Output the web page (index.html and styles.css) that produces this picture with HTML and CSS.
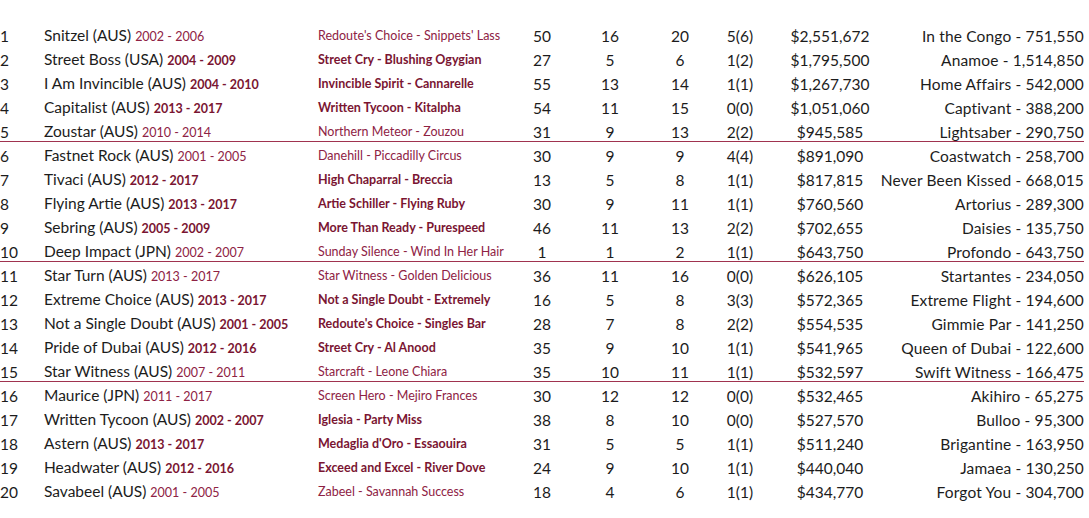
FILE: index.html
```html
<!DOCTYPE html>
<html>
<head>
<meta charset="utf-8">
<link rel="stylesheet" href="styles.css">
</head>
<body>
<div class="table">
  <div class="row">
    <span class="rank">1</span><span class="name">Snitzel (AUS) <span class="yrs">2002 - 2006</span></span><span class="sire">Redoute's Choice - Snippets' Lass</span><span class="n">50</span><span class="n">16</span><span class="n">20</span><span class="n">5(6)</span><span class="n money">$2,551,672</span><span class="best">In the Congo - 751,550</span>
  </div>
  <div class="row bold">
    <span class="rank">2</span><span class="name">Street Boss (USA) <span class="yrs">2004 - 2009</span></span><span class="sire">Street Cry - Blushing Ogygian</span><span class="n">27</span><span class="n">5</span><span class="n">6</span><span class="n">1(2)</span><span class="n money">$1,795,500</span><span class="best">Anamoe - 1,514,850</span>
  </div>
  <div class="row bold">
    <span class="rank">3</span><span class="name">I Am Invincible (AUS) <span class="yrs">2004 - 2010</span></span><span class="sire">Invincible Spirit - Cannarelle</span><span class="n">55</span><span class="n">13</span><span class="n">14</span><span class="n">1(1)</span><span class="n money">$1,267,730</span><span class="best">Home Affairs - 542,000</span>
  </div>
  <div class="row bold">
    <span class="rank">4</span><span class="name">Capitalist (AUS) <span class="yrs">2013 - 2017</span></span><span class="sire">Written Tycoon - Kitalpha</span><span class="n">54</span><span class="n">11</span><span class="n">15</span><span class="n">0(0)</span><span class="n money">$1,051,060</span><span class="best">Captivant - 388,200</span>
  </div>
  <div class="row divider">
    <span class="rank">5</span><span class="name">Zoustar (AUS) <span class="yrs">2010 - 2014</span></span><span class="sire">Northern Meteor - Zouzou</span><span class="n">31</span><span class="n">9</span><span class="n">13</span><span class="n">2(2)</span><span class="n money">$945,585</span><span class="best">Lightsaber - 290,750</span>
  </div>
  <div class="row">
    <span class="rank">6</span><span class="name">Fastnet Rock (AUS) <span class="yrs">2001 - 2005</span></span><span class="sire">Danehill - Piccadilly Circus</span><span class="n">30</span><span class="n">9</span><span class="n">9</span><span class="n">4(4)</span><span class="n money">$891,090</span><span class="best">Coastwatch - 258,700</span>
  </div>
  <div class="row bold">
    <span class="rank">7</span><span class="name">Tivaci (AUS) <span class="yrs">2012 - 2017</span></span><span class="sire">High Chaparral - Breccia</span><span class="n">13</span><span class="n">5</span><span class="n">8</span><span class="n">1(1)</span><span class="n money">$817,815</span><span class="best">Never Been Kissed - 668,015</span>
  </div>
  <div class="row bold">
    <span class="rank">8</span><span class="name">Flying Artie (AUS) <span class="yrs">2013 - 2017</span></span><span class="sire">Artie Schiller - Flying Ruby</span><span class="n">30</span><span class="n">9</span><span class="n">11</span><span class="n">1(1)</span><span class="n money">$760,560</span><span class="best">Artorius - 289,300</span>
  </div>
  <div class="row bold">
    <span class="rank">9</span><span class="name">Sebring (AUS) <span class="yrs">2005 - 2009</span></span><span class="sire">More Than Ready - Purespeed</span><span class="n">46</span><span class="n">11</span><span class="n">13</span><span class="n">2(2)</span><span class="n money">$702,655</span><span class="best">Daisies - 135,750</span>
  </div>
  <div class="row divider">
    <span class="rank">10</span><span class="name">Deep Impact (JPN) <span class="yrs">2002 - 2007</span></span><span class="sire">Sunday Silence - Wind In Her Hair</span><span class="n">1</span><span class="n">1</span><span class="n">2</span><span class="n">1(1)</span><span class="n money">$643,750</span><span class="best">Profondo - 643,750</span>
  </div>
  <div class="row">
    <span class="rank">11</span><span class="name">Star Turn (AUS) <span class="yrs">2013 - 2017</span></span><span class="sire">Star Witness - Golden Delicious</span><span class="n">36</span><span class="n">11</span><span class="n">16</span><span class="n">0(0)</span><span class="n money">$626,105</span><span class="best">Startantes - 234,050</span>
  </div>
  <div class="row bold">
    <span class="rank">12</span><span class="name">Extreme Choice (AUS) <span class="yrs">2013 - 2017</span></span><span class="sire">Not a Single Doubt - Extremely</span><span class="n">16</span><span class="n">5</span><span class="n">8</span><span class="n">3(3)</span><span class="n money">$572,365</span><span class="best">Extreme Flight - 194,600</span>
  </div>
  <div class="row bold">
    <span class="rank">13</span><span class="name">Not a Single Doubt (AUS) <span class="yrs">2001 - 2005</span></span><span class="sire">Redoute's Choice - Singles Bar</span><span class="n">28</span><span class="n">7</span><span class="n">8</span><span class="n">2(2)</span><span class="n money">$554,535</span><span class="best">Gimmie Par - 141,250</span>
  </div>
  <div class="row bold">
    <span class="rank">14</span><span class="name">Pride of Dubai (AUS) <span class="yrs">2012 - 2016</span></span><span class="sire">Street Cry - Al Anood</span><span class="n">35</span><span class="n">9</span><span class="n">10</span><span class="n">1(1)</span><span class="n money">$541,965</span><span class="best">Queen of Dubai - 122,600</span>
  </div>
  <div class="row divider">
    <span class="rank">15</span><span class="name">Star Witness (AUS) <span class="yrs">2007 - 2011</span></span><span class="sire">Starcraft - Leone Chiara</span><span class="n">35</span><span class="n">10</span><span class="n">11</span><span class="n">1(1)</span><span class="n money">$532,597</span><span class="best">Swift Witness - 166,475</span>
  </div>
  <div class="row">
    <span class="rank">16</span><span class="name">Maurice (JPN) <span class="yrs">2011 - 2017</span></span><span class="sire">Screen Hero - Mejiro Frances</span><span class="n">30</span><span class="n">12</span><span class="n">12</span><span class="n">0(0)</span><span class="n money">$532,465</span><span class="best">Akihiro - 65,275</span>
  </div>
  <div class="row bold">
    <span class="rank">17</span><span class="name">Written Tycoon (AUS) <span class="yrs">2002 - 2007</span></span><span class="sire">Iglesia - Party Miss</span><span class="n">38</span><span class="n">8</span><span class="n">10</span><span class="n">0(0)</span><span class="n money">$527,570</span><span class="best">Bulloo - 95,300</span>
  </div>
  <div class="row bold">
    <span class="rank">18</span><span class="name">Astern (AUS) <span class="yrs">2013 - 2017</span></span><span class="sire">Medaglia d'Oro - Essaouira</span><span class="n">31</span><span class="n">5</span><span class="n">5</span><span class="n">1(1)</span><span class="n money">$511,240</span><span class="best">Brigantine - 163,950</span>
  </div>
  <div class="row bold">
    <span class="rank">19</span><span class="name">Headwater (AUS) <span class="yrs">2012 - 2016</span></span><span class="sire">Exceed and Excel - River Dove</span><span class="n">24</span><span class="n">9</span><span class="n">10</span><span class="n">1(1)</span><span class="n money">$440,040</span><span class="best">Jamaea - 130,250</span>
  </div>
  <div class="row">
    <span class="rank">20</span><span class="name">Savabeel (AUS) <span class="yrs">2001 - 2005</span></span><span class="sire">Zabeel - Savannah Success</span><span class="n">18</span><span class="n">4</span><span class="n">6</span><span class="n">1(1)</span><span class="n money">$434,770</span><span class="best">Forgot You - 304,700</span>
  </div>
</div>
</body>
</html>
```

FILE: styles.css
```css
html, body {
  margin: 0;
  padding: 0;
  background: #ffffff;
}

body {
  font-family: "Lato", "Liberation Sans", sans-serif;
  color: #1c1c1c;
  width: 1089px;
}

.table {
  padding: 24px 5px 0 0;
}

.row {
  display: grid;
  grid-template-columns: 44px 274px 190px 68px 68px 72px 48px 116px 1fr;
  align-items: center;
  height: 24px;
  font-size: 15.5px;
  line-height: 18px;
  white-space: nowrap;
}

.row.divider {
  background: linear-gradient(#a0334f, #a0334f) no-repeat 0 21px / 100% 1px;
}

.rank {
  text-align: left;
}

.yrs,
.sire {
  color: #8e2244;
  font-size: 12.5px;
}

.bold .yrs,
.bold .sire {
  color: #7a1532;
  font-weight: 700;
}

.n {
  text-align: center;
}

.money {
  padding-left: 16px;
}

.best {
  text-align: right;
  letter-spacing: 0.15px;
}
```
